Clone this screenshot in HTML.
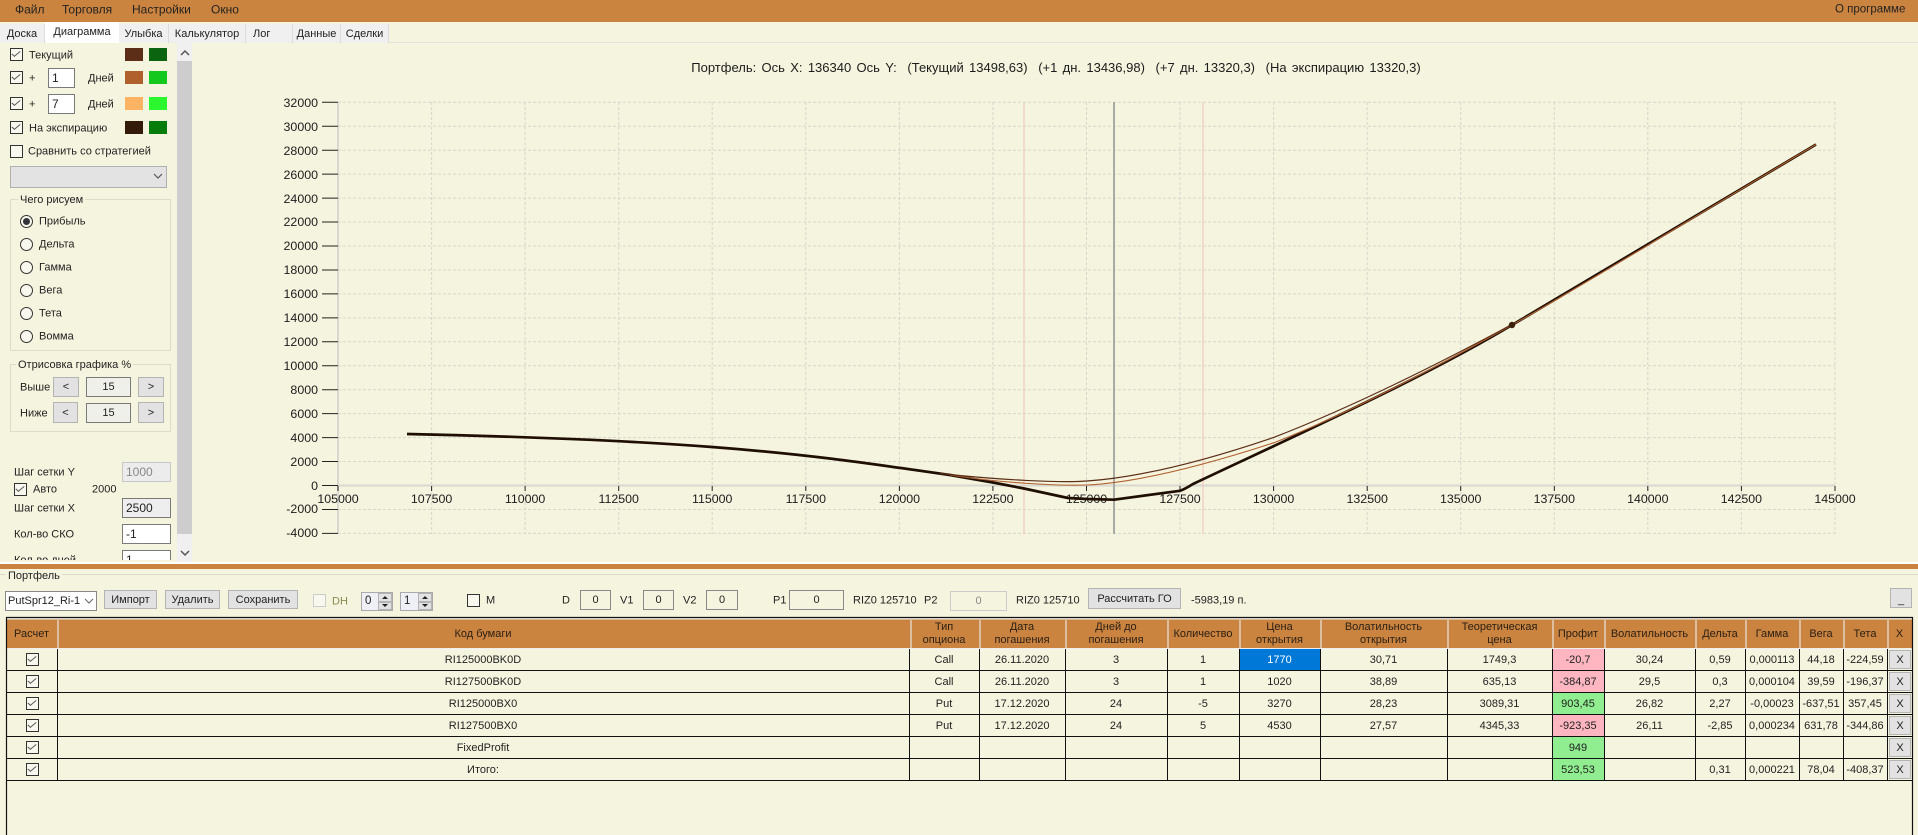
<!DOCTYPE html>
<html lang="ru"><head><meta charset="utf-8"><title>Диаграмма</title>
<style>
html,body{margin:0;padding:0;width:1918px;height:835px;overflow:hidden;background:#f5f4df}
body{position:relative;font:11px/13px "Liberation Sans","Noto Sans CJK SC",sans-serif;color:#222}
.a{position:absolute;white-space:nowrap}
.t{position:absolute;white-space:nowrap;transform:translateY(calc(-50% + 1px))}
.cb{position:absolute;width:11px;height:11px;border:1px solid #333;background:#f8f8ee}
.cb.on::after{content:"";position:absolute;left:3px;top:0;width:3px;height:7px;border:solid #555;border-width:0 1px 1px 0;transform:rotate(42deg) skewX(-8deg)}
.sw{position:absolute;width:18px;height:13px}
.rb{position:absolute;width:11px;height:11px;border:1px solid #333;border-radius:50%;background:#f8f8ee}
.rb.on::after{content:"";position:absolute;left:2px;top:2px;width:7px;height:7px;border-radius:50%;background:#33333a}
.inp{position:absolute;box-sizing:border-box;border:1px solid #7a7a7a;background:#fff;padding-left:3px;display:flex;align-items:center}
.cen{justify-content:center;padding:0}
.btn{position:absolute;box-sizing:border-box;background:#e2e2e2;border:1px solid #b4b4b4;display:flex;align-items:center;justify-content:center;padding-top:1px}
.grp{position:absolute;box-sizing:border-box;border:1px solid #dcdccc}
.lg{position:absolute;background:#f5f4df;padding:0 2px;white-space:nowrap}
.tab{position:absolute;top:24px;height:19px;box-sizing:border-box;background:#f0f0f0;border-right:1px solid #dcdcdc;text-align:center;line-height:21px}
table{position:absolute;left:6px;top:619px;width:1906px;border-collapse:collapse;table-layout:fixed}
td,th{padding:0;text-align:center;font-weight:normal;overflow:hidden;white-space:nowrap}
th{height:30px;line-height:13px;background:#cb8440;color:#2b2015}
td{height:22px;line-height:22px}
.sel{background:#0078d7;color:#fff}.pk{background:#ffb6c1}.gr{background:#90ee90}
svg{position:absolute;left:0;top:0}
</style></head><body>

<!-- menu -->
<div class="a" style="left:0;top:0;width:1918px;height:22px;background:#cb8440"></div>
<div class="t" style="left:15px;top:9px;font-size:12px">Файл</div>
<div class="t" style="left:62px;top:9px;font-size:12px">Торговля</div>
<div class="t" style="left:132px;top:9px;font-size:12px">Настройки</div>
<div class="t" style="left:211px;top:9px;font-size:12px">Окно</div>
<div class="t" style="left:1835px;top:9px;font-size:11.5px">О программе</div>

<!-- tabs -->
<div class="a" style="left:0;top:22px;width:1918px;height:21px;background:#f5f4df"></div>
<div class="a" style="left:0;top:42px;width:1918px;height:1px;background:#e2e2d8"></div>
<div class="tab" style="left:0;width:45px">Доска</div>
<div class="tab" style="left:45px;width:74px;top:22px;height:21px;background:#fff;border:0;line-height:21px">Диаграмма</div>
<div class="tab" style="left:119px;width:50px">Улыбка</div>
<div class="tab" style="left:169px;width:77px">Калькулятор</div>
<div class="tab" style="left:246px;width:47px;text-align:left;padding-left:7px">Лог</div>
<div class="tab" style="left:293px;width:48px">Данные</div>
<div class="tab" style="left:341px;width:48px">Сделки</div>

<!-- left panel -->
<div class="cb on" style="left:10px;top:48px"></div><div class="t" style="left:29px;top:55px">Текущий</div>
<div class="sw" style="left:125px;top:48px;background:#5c2e17"></div><div class="sw" style="left:149px;top:48px;background:#0b640f"></div>
<div class="cb on" style="left:10px;top:71px"></div><div class="t" style="left:29px;top:78px">+</div>
<div class="inp" style="left:48px;top:68px;width:27px;height:20px;font-size:12px">1</div><div class="t" style="left:88px;top:78px">Дней</div>
<div class="sw" style="left:125px;top:71px;background:#b0602d"></div><div class="sw" style="left:149px;top:71px;background:#14c81e"></div>
<div class="cb on" style="left:10px;top:97px"></div><div class="t" style="left:29px;top:104px">+</div>
<div class="inp" style="left:48px;top:94px;width:27px;height:20px;font-size:12px">7</div><div class="t" style="left:88px;top:104px">Дней</div>
<div class="sw" style="left:125px;top:97px;background:#fcb464"></div><div class="sw" style="left:149px;top:97px;background:#2cf62e"></div>
<div class="cb on" style="left:10px;top:121px"></div><div class="t" style="left:29px;top:128px">На экспирацию</div>
<div class="sw" style="left:125px;top:121px;background:#341a08"></div><div class="sw" style="left:149px;top:121px;background:#067c0a"></div>
<div class="cb" style="left:10px;top:145px"></div><div class="t" style="left:28px;top:151px">Сравнить со стратегией</div>
<div class="a" style="left:10px;top:166px;width:155px;height:20px;background:#e3e3e3;border:1px solid #b0b0b0"></div>
<svg width="1918" height="835" style="pointer-events:none">
<path d="M154 174l4 4 4-4" fill="none" stroke="#555" stroke-width="1.2"/>
</svg>
<div class="a" style="left:177px;top:43px;width:15px;height:19px;background:#f0f0f0"></div>
<div class="a" style="left:177px;top:61px;width:15px;height:473px;background:#cdcdcd"></div>
<div class="a" style="left:177px;top:534px;width:15px;height:28px;background:#f0f0f0"></div>
<svg width="1918" height="835"><path d="M181 55l4-4 4 4M181 551l4 4 4-4" fill="none" stroke="#555" stroke-width="1.5"/></svg>

<div class="grp" style="left:10px;top:199px;width:161px;height:152px"></div>
<div class="lg" style="left:18px;top:194px">Чего рисуем</div>
<div class="rb on" style="left:20px;top:215px"></div><div class="t" style="left:39px;top:221px">Прибыль</div>
<div class="rb" style="left:20px;top:238px"></div><div class="t" style="left:39px;top:244px">Дельта</div>
<div class="rb" style="left:20px;top:261px"></div><div class="t" style="left:39px;top:267px">Гамма</div>
<div class="rb" style="left:20px;top:284px"></div><div class="t" style="left:39px;top:290px">Вега</div>
<div class="rb" style="left:20px;top:307px"></div><div class="t" style="left:39px;top:313px">Тета</div>
<div class="rb" style="left:20px;top:330px"></div><div class="t" style="left:39px;top:336px">Вомма</div>

<div class="grp" style="left:10px;top:364px;width:161px;height:68px"></div>
<div class="lg" style="left:16px;top:359px">Отрисовка графика %</div>
<div class="t" style="left:20px;top:387px">Выше</div>
<div class="btn" style="left:53px;top:377px;width:26px;height:20px">&lt;</div>
<div class="inp cen" style="left:86px;top:377px;width:45px;height:20px;background:#f0f0ea">15</div>
<div class="btn" style="left:138px;top:377px;width:26px;height:20px">&gt;</div>
<div class="t" style="left:20px;top:413px">Ниже</div>
<div class="btn" style="left:53px;top:402px;width:25px;height:21px">&lt;</div>
<div class="inp cen" style="left:86px;top:403px;width:45px;height:20px;background:#f0f0ea">15</div>
<div class="btn" style="left:138px;top:402px;width:26px;height:21px">&gt;</div>

<div class="t" style="left:14px;top:472px">Шаг сетки Y</div>
<div class="inp" style="left:122px;top:462px;width:49px;height:20px;background:#ececec;border-color:#c8c8c8;color:#888;font-size:12px">1000</div>
<div class="cb on" style="left:14px;top:483px"></div><div class="t" style="left:33px;top:489px">Авто</div>
<div class="t" style="left:92px;top:489px">2000</div>
<div class="t" style="left:14px;top:508px">Шаг сетки X</div>
<div class="inp" style="left:122px;top:498px;width:49px;height:20px;background:#eee;font-size:12px">2500</div>
<div class="t" style="left:14px;top:534px">Кол-во СКО</div>
<div class="inp" style="left:122px;top:524px;width:49px;height:20px;font-size:12px">-1</div>
<div class="a" style="left:0;top:545px;width:176px;height:15px;overflow:hidden">
<div class="t" style="left:14px;top:15px">Кол-во дней</div>
<div class="inp" style="left:122px;top:5px;width:49px;height:20px;font-size:12px">1</div>
</div>

<!-- chart -->
<svg width="1918" height="835" style="font:12.4px 'Liberation Sans',sans-serif;fill:#1c1c1c">
<path d="M338 102.3H1835M338 126.25H1835M338 150.2H1835M338 174.15H1835M338 198.1H1835M338 222.05H1835M338 246H1835M338 269.95H1835M338 293.9H1835M338 317.85H1835M338 341.8H1835M338 365.75H1835M338 389.7H1835M338 413.65H1835M338 437.6H1835M338 461.55H1835M338 509.45H1835M338 533.4H1835" stroke="#d6d6cc" stroke-dasharray="3 2" fill="none"/>
<path d="M431.6 102V534M525.1 102V534M618.7 102V534M712.2 102V534M805.8 102V534M899.4 102V534M992.9 102V534M1086.5 102V534M1180 102V534M1273.6 102V534M1367.2 102V534M1460.7 102V534M1554.3 102V534M1647.8 102V534M1741.4 102V534M1835 102V534" stroke="#d6d6cc" stroke-dasharray="3 2" fill="none"/>
<path d="M338 102V534M338 485.5H1835" stroke="#d8d8d0" stroke-width="2" fill="none"/>
<path d="M1024 102V534M1203 102V534" stroke="#f3c9c0" stroke-width="1.2" fill="none"/>
<path d="M1114 102V534" stroke="#a8aba6" stroke-width="2" fill="none"/>
<path d="M322 102.3H338M322 126.25H338M322 150.2H338M322 174.15H338M322 198.1H338M322 222.05H338M322 246H338M322 269.95H338M322 293.9H338M322 317.85H338M322 341.8H338M322 365.75H338M322 389.7H338M322 413.65H338M322 437.6H338M322 461.55H338M322 485.5H338M322 509.45H338M322 533.4H338" stroke="#222" fill="none"/>
<path d="M338 486v5M431.6 486v5M525.1 486v5M618.7 486v5M712.2 486v5M805.8 486v5M899.4 486v5M992.9 486v5M1086.5 486v5M1180 486v5M1273.6 486v5M1367.2 486v5M1460.7 486v5M1554.3 486v5M1647.8 486v5M1741.4 486v5M1835 486v5" stroke="#222" fill="none"/>
<g text-anchor="end">
<text x="318" y="107">32000</text><text x="318" y="131">30000</text><text x="318" y="155">28000</text><text x="318" y="179">26000</text><text x="318" y="203">24000</text><text x="318" y="226">22000</text><text x="318" y="250">20000</text><text x="318" y="274">18000</text><text x="318" y="298">16000</text><text x="318" y="322">14000</text><text x="318" y="346">12000</text><text x="318" y="370">10000</text><text x="318" y="394">8000</text><text x="318" y="418">6000</text><text x="318" y="442">4000</text><text x="318" y="466">2000</text><text x="318" y="490">0</text><text x="318" y="513">-2000</text><text x="318" y="537">-4000</text>
</g>
<g text-anchor="middle">
<text x="338" y="503">105000</text><text x="431.6" y="503">107500</text><text x="525.1" y="503">110000</text><text x="618.7" y="503">112500</text><text x="712.2" y="503">115000</text><text x="805.8" y="503">117500</text><text x="899.4" y="503">120000</text><text x="992.9" y="503">122500</text><text x="1086.5" y="503">125000</text><text x="1180" y="503">127500</text><text x="1273.6" y="503">130000</text><text x="1367.2" y="503">132500</text><text x="1460.7" y="503">135000</text><text x="1554.3" y="503">137500</text><text x="1647.8" y="503">140000</text><text x="1741.4" y="503">142500</text><text x="1835" y="503">145000</text>
</g>
<text x="1056" y="72" text-anchor="middle" xml:space="preserve" style="font-size:13px;word-spacing:1.7px">Портфель: Ось X: 136340 Ось Y:  (Текущий 13498,63)  (+1 дн. 13436,98)  (+7 дн. 13320,3)  (На экспирацию 13320,3)</text>
<path d="M407 434C500 436 620 440 712 447S860 462 950 475L993 482.5L1024 488.5L1068 498L1087 499L1114 499.7L1180 490.8C1184 489.5 1189 486.5 1193 484C1290 438 1420 380 1512 325S1700 213 1816 144.5" fill="none" stroke="#1f0f03" stroke-width="2.7" stroke-linejoin="round"/>
<path d="M950 475C1000 483 1060 486 1087 485C1130 483 1190 470 1274 442.7C1350 413 1440 365 1512 325S1700 213 1816 144.5" fill="none" stroke="#b0602d" stroke-width="1.1"/>
<path d="M940 473.5C1000 480 1060 483 1087 481C1130 478 1190 466 1274 437.3C1350 408 1440 363 1512 324.5" fill="none" stroke="#5c2e17" stroke-width="1.2"/>
<circle cx="1512" cy="325" r="3.2" fill="#3e210c"/>
</svg>

<!-- splitter -->
<div class="a" style="left:0;top:562px;width:1918px;height:2px;background:#fff"></div>
<div class="a" style="left:0;top:564px;width:1918px;height:5px;background:#cb8440"></div>
<div class="a" style="left:0;top:574px;width:1918px;height:1px;background:#dcdccc"></div>
<div class="lg" style="left:6px;top:570px">Портфель</div>

<!-- toolbar -->
<div class="inp" style="left:5px;top:591px;width:92px;height:20px;border-color:#888;padding-left:2px">PutSpr12_Ri-1</div>
<svg width="1918" height="835"><path d="M85 599l4 4 4-4" fill="none" stroke="#666"/></svg>
<div class="btn" style="left:104px;top:590px;width:53px;height:19px">Импорт</div>
<div class="btn" style="left:165px;top:590px;width:55px;height:19px">Удалить</div>
<div class="btn" style="left:228px;top:590px;width:70px;height:19px">Сохранить</div>
<div class="cb" style="left:313px;top:594px;border-color:#ccc"></div>
<div class="t" style="left:332px;top:601px;color:#8a8a50">DH</div>
<div class="inp" style="left:361px;top:592px;width:32px;height:19px;background:#eef0f5;border-color:#aaa;font-size:11.5px">0</div>
<div class="btn" style="left:378px;top:593px;width:14px;height:8.5px;font-size:0;padding:0"></div><div class="btn" style="left:378px;top:601.5px;width:14px;height:8.5px;font-size:0;padding:0"></div>
<div class="inp" style="left:400px;top:592px;width:33px;height:19px;background:#eef0f5;border-color:#aaa;font-size:11.5px">1</div>
<div class="btn" style="left:418px;top:593px;width:14px;height:8.5px;font-size:0;padding:0"></div><div class="btn" style="left:418px;top:601.5px;width:14px;height:8.5px;font-size:0;padding:0"></div>
<svg width="1918" height="835"><path d="M382 599l3-3 3 3zM382 604l3 3 3-3zM422 599l3-3 3 3zM422 604l3 3 3-3z" fill="#222"/></svg>
<div class="cb" style="left:467px;top:594px"></div><div class="t" style="left:486px;top:600px">M</div>
<div class="t" style="left:562px;top:600px">D</div>
<div class="inp cen" style="left:580px;top:590px;width:31px;height:20px;background:#f5f4df;border-color:#888">0</div>
<div class="t" style="left:620px;top:600px">V1</div>
<div class="inp cen" style="left:643px;top:590px;width:31px;height:20px;background:#f5f4df;border-color:#888">0</div>
<div class="t" style="left:683px;top:600px">V2</div>
<div class="inp cen" style="left:706px;top:590px;width:32px;height:20px;background:#f5f4df;border-color:#888">0</div>
<div class="t" style="left:773px;top:600px">P1</div>
<div class="inp cen" style="left:789px;top:590px;width:55px;height:20px;background:#f5f4df;border-color:#888">0</div>
<div class="t" style="left:853px;top:600px">RIZ0 125710</div>
<div class="t" style="left:924px;top:600px">P2</div>
<div class="inp cen" style="left:950px;top:591px;width:57px;height:20px;background:#f5f4df;border-color:#ccc;color:#888">0</div>
<div class="t" style="left:1016px;top:600px">RIZ0 125710</div>
<div class="btn" style="left:1088px;top:588px;width:93px;height:21px">Рассчитать ГО</div>
<div class="t" style="left:1191px;top:600px">-5983,19 п.</div>
<div class="btn" style="left:1890px;top:588px;width:22px;height:20px;align-items:flex-end">_</div>

<!-- table -->
<table>
<colgroup><col style="width:51px"><col style="width:852px"><col style="width:70px"><col style="width:86px"><col style="width:102px"><col style="width:72px"><col style="width:81px"><col style="width:127px"><col style="width:105px"><col style="width:52px"><col style="width:91px"><col style="width:50px"><col style="width:54px"><col style="width:44px"><col style="width:44px"><col style="width:25px"></colgroup>
<tr><th>Расчет</th><th>Код бумаги</th><th>Тип<br>опциона</th><th>Дата<br>погашения</th><th>Дней до<br>погашения</th><th>Количество</th><th>Цена<br>открытия</th><th>Волатильность<br>открытия</th><th>Теоретическая<br>цена</th><th>Профит</th><th>Волатильность</th><th>Дельта</th><th>Гамма</th><th>Вега</th><th>Тета</th><th>X</th></tr>
<tr><td></td><td>RI125000BK0D</td><td>Call</td><td>26.11.2020</td><td>3</td><td>1</td><td class="sel">1770</td><td>30,71</td><td>1749,3</td><td class="pk">-20,7</td><td>30,24</td><td>0,59</td><td>0,000113</td><td>44,18</td><td>-224,59</td><td></td></tr>
<tr><td></td><td>RI127500BK0D</td><td>Call</td><td>26.11.2020</td><td>3</td><td>1</td><td>1020</td><td>38,89</td><td>635,13</td><td class="pk">-384,87</td><td>29,5</td><td>0,3</td><td>0,000104</td><td>39,59</td><td>-196,37</td><td></td></tr>
<tr><td></td><td>RI125000BX0</td><td>Put</td><td>17.12.2020</td><td>24</td><td>-5</td><td>3270</td><td>28,23</td><td>3089,31</td><td class="gr">903,45</td><td>26,82</td><td>2,27</td><td>-0,00023</td><td>-637,51</td><td>357,45</td><td></td></tr>
<tr><td></td><td>RI127500BX0</td><td>Put</td><td>17.12.2020</td><td>24</td><td>5</td><td>4530</td><td>27,57</td><td>4345,33</td><td class="pk">-923,35</td><td>26,11</td><td>-2,85</td><td>0,000234</td><td>631,78</td><td>-344,86</td><td></td></tr>
<tr><td></td><td>FixedProfit</td><td></td><td></td><td></td><td></td><td></td><td></td><td></td><td class="gr">949</td><td></td><td></td><td></td><td></td><td></td><td></td></tr>
<tr><td></td><td>Итого:</td><td></td><td></td><td></td><td></td><td></td><td></td><td></td><td class="gr">523,53</td><td></td><td>0,31</td><td>0,000221</td><td>78,04</td><td>-408,37</td><td></td></tr>
</table>

<svg width="1918" height="835">
<!-- header separators -->
<path d="M58 620V648M911 620V648M980 620V648M1066 620V648M1168 620V648M1240 620V648M1321 620V648M1448 620V648M1553 620V648M1605 620V648M1696 620V648M1746 620V648M1800 620V648M1844 620V648M1888 620V648M7 619H1912M7 648.5H1912" stroke="#eee" stroke-width="1.1" fill="none"/>
<!-- grid -->
<path d="M6 670.5H1912M6 692.5H1912M6 714.5H1912M6 736.5H1912M6 758.5H1912M6 780.5H1912" stroke="#111" stroke-width="1" fill="none"/>
<path d="M57.5 649V781M909.5 649V781M979.5 649V781M1065.5 649V781M1167.5 649V781M1239.5 649V781M1320.5 649V781M1447.5 649V781M1552.5 649V781M1604.5 649V781M1695.5 649V781M1745.5 649V781M1799.5 649V781M1843.5 649V781M1887.5 649V781" stroke="#111" stroke-width="1" fill="none"/>
<path d="M6.5 835V617.5H1912.5V835" stroke="#111" stroke-width="1.2" fill="none"/>
</svg>

<div class="cb on" style="left:26px;top:653px"></div><div class="cb on" style="left:26px;top:675px"></div><div class="cb on" style="left:26px;top:697px"></div><div class="cb on" style="left:26px;top:719px"></div><div class="cb on" style="left:26px;top:741px"></div><div class="cb on" style="left:26px;top:763px"></div>

<div class="btn" style="left:1889px;top:650px;width:22px;height:19px">X</div>
<div class="btn" style="left:1889px;top:672px;width:22px;height:19px">X</div>
<div class="btn" style="left:1889px;top:694px;width:22px;height:19px">X</div>
<div class="btn" style="left:1889px;top:716px;width:22px;height:19px">X</div>
<div class="btn" style="left:1889px;top:738px;width:22px;height:19px">X</div>
<div class="btn" style="left:1889px;top:760px;width:22px;height:19px">X</div>

</body></html>
